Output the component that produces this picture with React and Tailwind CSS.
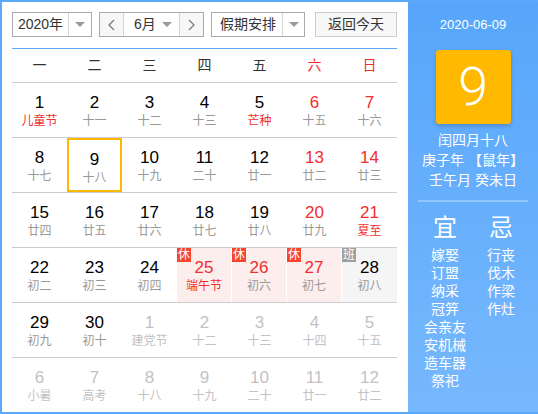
import React from "react"

const weekdays = ["一", "二", "三", "四", "五", "六", "日"]

// kind: "cur" (this month), "dim" (next month)
const rows = [
  [
    { d: 1, l: "儿童节", fest: true },
    { d: 2, l: "十一" },
    { d: 3, l: "十二" },
    { d: 4, l: "十三" },
    { d: 5, l: "芒种", fest: true },
    { d: 6, l: "十五", red: true },
    { d: 7, l: "十六", red: true },
  ],
  [
    { d: 8, l: "十七" },
    { d: 9, l: "十八", selected: true },
    { d: 10, l: "十九" },
    { d: 11, l: "二十" },
    { d: 12, l: "廿一" },
    { d: 13, l: "廿二", red: true },
    { d: 14, l: "廿三", red: true },
  ],
  [
    { d: 15, l: "廿四" },
    { d: 16, l: "廿五" },
    { d: 17, l: "廿六" },
    { d: 18, l: "廿七" },
    { d: 19, l: "廿八" },
    { d: 20, l: "廿九", red: true },
    { d: 21, l: "夏至", red: true, fest: true },
  ],
  [
    { d: 22, l: "初二" },
    { d: 23, l: "初三" },
    { d: 24, l: "初四" },
    { d: 25, l: "端午节", red: true, fest: true, badge: "休" },
    { d: 26, l: "初六", red: true, badge: "休" },
    { d: 27, l: "初七", red: true, badge: "休" },
    { d: 28, l: "初八", badge: "班" },
  ],
  [
    { d: 29, l: "初九" },
    { d: 30, l: "初十" },
    { d: 1, l: "建党节", dim: true },
    { d: 2, l: "十二", dim: true },
    { d: 3, l: "十三", dim: true },
    { d: 4, l: "十四", dim: true },
    { d: 5, l: "十五", dim: true },
  ],
  [
    { d: 6, l: "小暑", dim: true },
    { d: 7, l: "高考", dim: true },
    { d: 8, l: "十八", dim: true },
    { d: 9, l: "十九", dim: true },
    { d: 10, l: "二十", dim: true },
    { d: 11, l: "廿一", dim: true },
    { d: 12, l: "廿二", dim: true },
  ],
]

const yi = ["嫁娶", "订盟", "纳采", "冠笄", "会亲友", "安机械", "造车器", "祭祀"]
const ji = ["行丧", "伐木", "作梁", "作灶"]

const Caret = () => (
  <span className="w-0 h-0 border-l-[5px] border-r-[5px] border-t-[5px] border-l-transparent border-r-transparent border-t-[#999]"></span>
)

const Chevron = ({ dir }) => (
  <svg width="7" height="12" viewBox="0 0 7 12" fill="none" stroke="#777" strokeWidth="1.2">
    {dir === "left" ? <path d="M6 1 L1 6 L6 11" /> : <path d="M1 1 L6 6 L1 11" />}
  </svg>
)

const DayCell = ({ c }) => {
  let bg = ""
  if (c.badge === "休") bg = "bg-[#fdeeee] mr-px"
  if (c.badge === "班") bg = "bg-[#f5f5f5]"

  let numColor = "text-black"
  if (c.red) numColor = "text-[#f12d2d]"
  if (c.dim) numColor = "text-[#c2c2c2]"

  let lunarColor = "text-[#999]"
  if (c.fest) lunarColor = "text-[#f12d2d]"
  if (c.dim) lunarColor = "text-[#c2c2c2]"

  return (
    <div className={`relative flex flex-col items-center pt-[11px] ${bg} ${c.selected ? "border-2 border-[#ffb800] pt-[9px]" : ""}`}>
      {c.badge && (
        <span
          className={`absolute left-0 top-0 w-[14px] h-[14px] flex items-center justify-center text-[12px] leading-none text-white ${
            c.badge === "休" ? "bg-[#f8432f]" : "bg-[#9e9e9e]"
          }`}
        >
          {c.badge}
        </span>
      )}
      <span className={`text-[17px] leading-[18px] ${numColor}`}>{c.d}</span>
      <span className={`text-[12px] leading-[18px] ${lunarColor}`}>{c.l}</span>
    </div>
  )
}

export default function App() {
  return (
    <div
      className="w-[538px] h-[414px] flex border-2 border-r-0 border-[#5ba9fb] bg-white text-[#333]"
      style={{ fontFamily: '"Liberation Sans", "Noto Sans CJK SC", sans-serif' }}
    >
      {/* calendar */}
      <div className="w-[406px] h-full bg-white pl-[10px] pt-[10px]">
        <div className="w-[385px] flex h-[25px] text-[14px]">
          <div className="w-[80px] flex border border-[#a9a9a9] bg-white">
            <div className="w-[55px] flex items-center justify-center">2020年</div>
            <div className="flex-1 flex items-center justify-center border-l border-[#d5d5d5]">
              <Caret />
            </div>
          </div>
          <div className="w-[105px] ml-[7px] flex border border-[#a9a9a9]">
            <div className="w-[23px] flex items-center justify-center bg-[#f7f7f7]">
              <Chevron dir="left" />
            </div>
            <div className="flex-1 flex items-center justify-between border-l border-r border-[#d5d5d5] pl-[10px] pr-[7px] bg-white">
              <span>6月</span>
              <Caret />
            </div>
            <div className="w-[23px] flex items-center justify-center bg-[#f7f7f7]">
              <Chevron dir="right" />
            </div>
          </div>
          <div className="w-[94px] ml-[7px] flex border border-[#a9a9a9] bg-white">
            <div className="w-[70px] flex items-center justify-center pl-[2px]">假期安排</div>
            <div className="flex-1 flex items-center justify-center border-l border-[#d5d5d5]">
              <Caret />
            </div>
          </div>
          <div className="w-[82px] ml-[10px] flex items-center justify-center border border-[#ccc] bg-[#f7f7f7]">
            返回今天
          </div>
        </div>

        <div className="w-[385px] h-px mt-[11px] bg-[#5ba9fb]"></div>

        <div className="w-[385px] grid grid-cols-7 h-[34px] border-b border-[#ccc] text-[14px]">
          {weekdays.map((w, i) => (
            <div key={w} className={`flex items-center justify-center ${i > 4 ? "text-[#f12d2d]" : "text-[#333]"}`}>
              {w}
            </div>
          ))}
        </div>

        {rows.map((r, ri) => (
          <div
            key={ri}
            className={`w-[385px] grid grid-cols-7 ${ri < rows.length - 1 ? "h-[55px] border-b border-[#ccc]" : "h-[54px]"}`}
          >
            {r.map((c, ci) => (
              <DayCell key={ci} c={c} />
            ))}
          </div>
        ))}
      </div>

      {/* side panel */}
      <div className="w-[130px] h-full bg-gradient-to-b from-[#57a6fb] to-[#76b8fd] flex flex-col items-center text-white">
        <div className="mt-[13px] h-[20px] leading-[20px] text-[13px]">2020-06-09</div>
        <div className="mt-[15px] w-[75px] h-[74px] rounded-[3px] bg-[#ffb900] shadow-[0_2px_4px_rgba(0,0,0,0.2)] flex items-center justify-center">
          <span className="text-[54px] leading-none font-light" style={{ fontFamily: "Roboto, sans-serif" }}>
            9
          </span>
        </div>
        <div className="mt-[6px] text-[14px] leading-[20px]">闰四月十八</div>
        <div className="text-[14px] leading-[20px]">庚子年 【鼠年】</div>
        <div className="text-[14px] leading-[20px]">壬午月 癸未日</div>
        <div className="mt-[10px] w-[110px] h-[2px] bg-[#93c7fc]"></div>
        <div className="mt-[11px] w-[112px] flex">
          <div className="w-[56px] flex flex-col items-center">
            <div className="text-[24px] leading-[30px]">宜</div>
            <div className="mt-[3px] flex flex-col items-center text-[14px] leading-[18px]">
              {yi.map((t) => (
                <span key={t}>{t}</span>
              ))}
            </div>
          </div>
          <div className="w-[56px] flex flex-col items-center">
            <div className="text-[24px] leading-[30px]">忌</div>
            <div className="mt-[3px] flex flex-col items-center text-[14px] leading-[18px]">
              {ji.map((t) => (
                <span key={t}>{t}</span>
              ))}
            </div>
          </div>
        </div>
      </div>
    </div>
  )
}
